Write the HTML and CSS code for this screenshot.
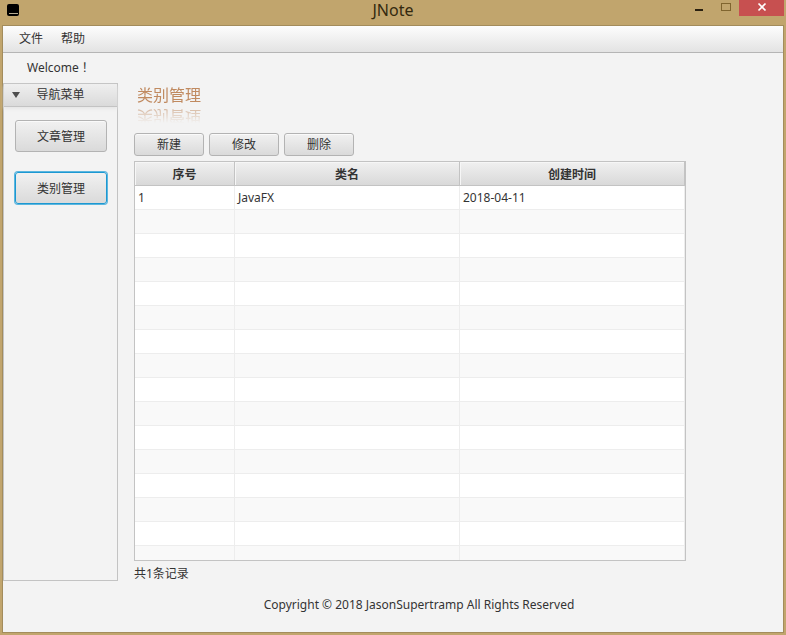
FILE: index.html
```html
<!DOCTYPE html>
<html lang="zh-CN">
<head>
<meta charset="utf-8">
<title>JNote</title>
<link rel="stylesheet" href="styles.css">
</head>
<body>
<div class="window">
  <header class="titlebar">
    <svg class="app-icon" viewBox="0 0 12 12" aria-hidden="true"><rect width="12" height="12" rx="2" fill="#000"/><rect x="2" y="9" width="9" height="1" fill="#b5aa90"/></svg>
    <h1 class="window-title">JNote</h1>
    <div class="window-controls">
      <button class="control" type="button" aria-label="最小化"><svg viewBox="0 0 12 12"><rect x="2" y="7" width="8" height="2" fill="#2a2010"/></svg></button>
      <button class="control" type="button" aria-label="最大化"><svg viewBox="0 0 12 12"><rect x="1.5" y="1.5" width="9" height="7" fill="none" stroke="#80652f"/></svg></button>
      <button class="control control-close" type="button" aria-label="关闭"><svg viewBox="0 0 12 12"><path d="M2.5 1.5 9.5 8.5M9.5 1.5 2.5 8.5" fill="none" stroke="#fff" stroke-width="1.7"/></svg></button>
    </div>
  </header>
  <div class="client">
    <nav class="menubar">
      <button class="menu" type="button">文件</button>
      <button class="menu" type="button">帮助</button>
    </nav>
    <p class="welcome" lang="zh-Hant">Welcome！</p>
    <div class="workspace">
      <aside class="sidebar">
        <button class="sidebar-head" type="button" aria-expanded="true"><svg class="arrow" viewBox="0 0 8 6" aria-hidden="true"><path d="M0 0h8L4 6z" fill="#4d4d4d"/></svg>导航菜单</button>
        <div class="sidebar-body">
          <button class="button button-nav" type="button">文章管理</button>
          <button class="button button-nav is-focused" type="button">类别管理</button>
        </div>
      </aside>
      <main class="content">
        <h2 class="page-title">类别管理</h2>
        <div class="toolbar">
          <button class="button" type="button">新建</button>
          <button class="button" type="button">修改</button>
          <button class="button" type="button">删除</button>
        </div>
        <div class="table-view">
          <table class="grid">
            <thead><tr><th class="col-index">序号</th><th>类名</th><th>创建时间</th></tr></thead>
            <tbody>
              <tr><td>1</td><td>JavaFX</td><td>2018-04-11</td></tr>
              <tr><td></td><td></td><td></td></tr>
              <tr><td></td><td></td><td></td></tr>
              <tr><td></td><td></td><td></td></tr>
              <tr><td></td><td></td><td></td></tr>
              <tr><td></td><td></td><td></td></tr>
              <tr><td></td><td></td><td></td></tr>
              <tr><td></td><td></td><td></td></tr>
              <tr><td></td><td></td><td></td></tr>
              <tr><td></td><td></td><td></td></tr>
              <tr><td></td><td></td><td></td></tr>
              <tr><td></td><td></td><td></td></tr>
              <tr><td></td><td></td><td></td></tr>
              <tr><td></td><td></td><td></td></tr>
              <tr><td></td><td></td><td></td></tr>
              <tr><td></td><td></td><td></td></tr>
            </tbody>
          </table>
        </div>
        <p class="count">共1条记录</p>
      </main>
    </div>
    <footer class="footer">Copyright © 2018 JasonSupertramp All Rights Reserved</footer>
  </div>
</div>
</body>
</html>
```
FILE: styles.css
```css
* {
  box-sizing: border-box;
}

body {
  margin: 0;
  background: #c1a56d;
  color: #333;
  font: 12px/20px "Noto Sans", "Noto Sans CJK SC", sans-serif;
}

button {
  margin: 0;
  padding: 0;
  border: 0;
  background: none;
  color: inherit;
  font: inherit;
}

h1, h2, p {
  margin: 0;
  font-weight: 400;
}

.window {
  display: flex;
  flex-direction: column;
  height: 100vh;
  padding: 0 2px 2px;
}

.titlebar {
  display: grid;
  grid-template-columns: 1fr auto 1fr;
  height: 25px;
}

.app-icon {
  width: 12px;
  height: 12px;
  margin: 4px 5px;
}

.window-title {
  color: #33290f;
  font-size: 16px;
}

.window-controls {
  display: flex;
  justify-content: flex-end;
  align-items: flex-start;
}

.control {
  display: flex;
  justify-content: center;
  align-items: center;
  width: 27px;
  height: 16px;
}

.control svg {
  width: 12px;
  height: 12px;
}

.control-close {
  width: 45px;
  background: #c75050;
}

.client {
  display: flex;
  flex: 1;
  flex-direction: column;
  min-height: 0;
  border: 1px solid #a38c5c;
  background: #f3f3f3;
}

.menubar {
  display: flex;
  gap: 18px;
  height: 27px;
  padding: 0 16px;
  border-bottom: 1px solid #b5b5b5;
  background: linear-gradient(#fdfdfd, #e3e3e3);
}

.welcome {
  padding: 5px 24px;
  font-family: "Noto Sans", "Noto Sans CJK TC", sans-serif;
}

.workspace {
  display: flex;
  flex: 1;
  gap: 16px;
  min-height: 0;
}

.sidebar {
  flex: none;
  width: 115px;
  border: 1px solid #c3c3c3;
}

.sidebar-head {
  position: relative;
  width: 100%;
  height: 23px;
  border-bottom: 1px solid #c3c3c3;
  background: linear-gradient(#efefef, #dadada);
  box-shadow: 0 2px 3px #e6e6e6;
}

.arrow {
  position: absolute;
  top: 8px;
  left: 8px;
  width: 8px;
  height: 6px;
}

.sidebar-body {
  display: flex;
  flex-direction: column;
  gap: 20px;
  padding: 13px 10px 13px 11px;
}

.button {
  width: 70px;
  height: 23px;
  border: 1px solid #b3b3b3;
  border-radius: 3px;
  background: linear-gradient(#f1f1f1, #dadada);
  box-shadow: inset 0 1px #fafafa;
}

.button-nav {
  width: 100%;
  height: 32px;
  padding-top: 2px;
}

.is-focused {
  border-color: #1c98d2;
  box-shadow: 0 0 0 1px #5cb6de;
}

.content {
  display: flex;
  flex: 1;
  flex-direction: column;
  min-width: 0;
  padding: 2px 97px 0 0;
}

.page-title {
  align-self: flex-start;
  margin: 0 3px 28px;
  color: #c08a60;
  font-size: 16px;
  line-height: 20px;
  -webkit-box-reflect: below 2px linear-gradient(transparent 20%, rgba(0, 0, 0, 0.6));
}

.toolbar {
  display: flex;
  gap: 5px;
  margin-bottom: 5px;
}

.table-view {
  flex: 1;
  min-height: 0;
  overflow: hidden;
  border: 1px solid #c3c3c3;
  background: #fff;
}

.grid {
  width: 100%;
  border-collapse: separate;
  border-spacing: 0;
  table-layout: fixed;
}

.grid tr {
  height: 24px;
}

.grid th {
  padding: 2px 0 0;
  border-right: 1px solid #c3c3c3;
  border-bottom: 1px solid #c3c3c3;
  background: linear-gradient(#f0f0f0, #d9d9d9);
  box-shadow: inset 1px 1px #f6f6f6;
}

.grid .col-index {
  width: 100px;
}

.grid td {
  padding: 0 3px;
  border-right: 1px solid #ededed;
  border-bottom: 1px solid #ededed;
}

.grid tbody tr:nth-child(even) {
  background: #f9f9f9;
}

.count {
  padding-top: 3px;
  height: 20px;
}

.footer {
  padding: 14px 0 17px 52px;
  text-align: center;
}
```
